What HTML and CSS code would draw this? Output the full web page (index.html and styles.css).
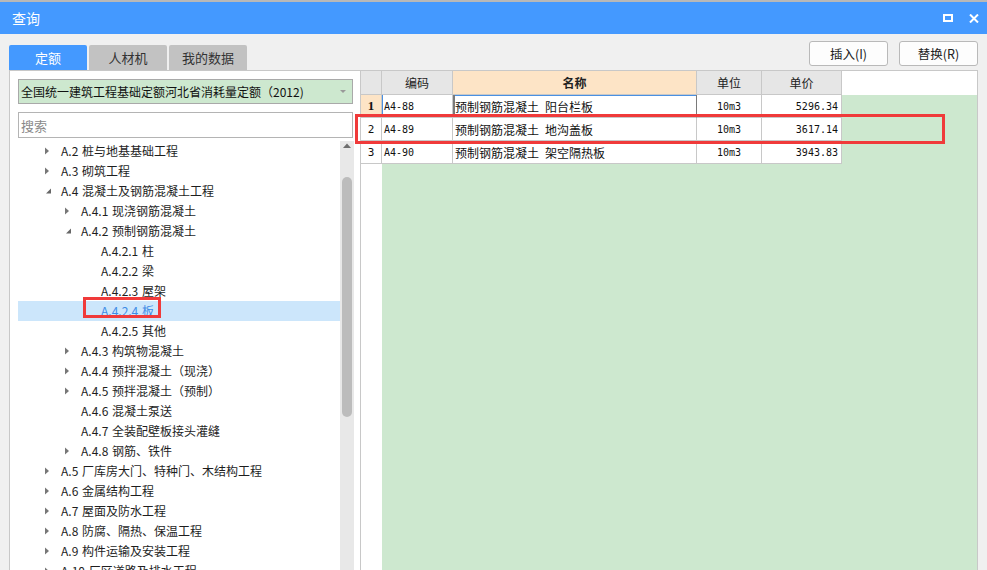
FILE: index.html
```html
<!DOCTYPE html>
<html lang="zh-CN">
<head>
<meta charset="utf-8">
<title>查询</title>
<link rel="stylesheet" href="styles.css">
</head>
<body>
<div class="titlebar">
  <span class="title">查询</span>
  <div class="winbtns">
    <svg class="ico-max" width="10" height="8" viewBox="0 0 10 8"><rect x="1" y="1" width="8" height="6" fill="none" stroke="#fff" stroke-width="2"/></svg>
    <svg class="ico-close" width="10" height="9" viewBox="0 0 10 9"><path d="M1 0.5 L9 8.5 M9 0.5 L1 8.5" stroke="#fff" stroke-width="2" fill="none"/></svg>
  </div>
</div>
<div class="toolbar">
  <div class="tabs">
    <div class="tab active">定额</div>
    <div class="tab">人材机</div>
    <div class="tab">我的数据</div>
  </div>
  <div class="actions">
    <button class="btn">插入(I)</button>
    <button class="btn">替换(R)</button>
  </div>
</div>
<div class="main">
  <div class="left">
    <div class="combo">
      <span class="combo-text">全国统一建筑工程基础定额河北省消耗量定额（2012)</span>
      <svg class="combo-arrow" width="6" height="3" viewBox="0 0 6 3"><path d="M0 0 H6 L3 3 Z" fill="#999"/></svg>
    </div>
    <div class="search">搜索</div>
    <div class="tree">
      <div class="tree-list">
        <div class="node l1"><span class="tw"><svg width="8" height="8" viewBox="0 0 8 8"><path d="M0 0.5 L4 4 L0 7.5 Z" fill="#777"/></svg></span>A.2 桩与地基基础工程</div>
        <div class="node l1"><span class="tw"><svg width="8" height="8" viewBox="0 0 8 8"><path d="M0 0.5 L4 4 L0 7.5 Z" fill="#777"/></svg></span>A.3 砌筑工程</div>
        <div class="node l1"><span class="tw"><svg width="8" height="8" viewBox="0 0 8 8"><path d="M6 1.5 L6 6.5 L1 6.5 Z" fill="#666"/></svg></span>A.4 混凝土及钢筋混凝土工程</div>
        <div class="node l2"><span class="tw"><svg width="8" height="8" viewBox="0 0 8 8"><path d="M0 0.5 L4 4 L0 7.5 Z" fill="#777"/></svg></span>A.4.1 现浇钢筋混凝土</div>
        <div class="node l2"><span class="tw"><svg width="8" height="8" viewBox="0 0 8 8"><path d="M6 1.5 L6 6.5 L1 6.5 Z" fill="#666"/></svg></span>A.4.2 预制钢筋混凝土</div>
        <div class="node l3"><span class="tw"></span>A.4.2.1 柱</div>
        <div class="node l3"><span class="tw"></span>A.4.2.2 梁</div>
        <div class="node l3"><span class="tw"></span>A.4.2.3 屋架</div>
        <div class="node l3 selected"><span class="tw"></span>A.4.2.4 板</div>
        <div class="node l3"><span class="tw"></span>A.4.2.5 其他</div>
        <div class="node l2"><span class="tw"><svg width="8" height="8" viewBox="0 0 8 8"><path d="M0 0.5 L4 4 L0 7.5 Z" fill="#777"/></svg></span>A.4.3 构筑物混凝土</div>
        <div class="node l2"><span class="tw"><svg width="8" height="8" viewBox="0 0 8 8"><path d="M0 0.5 L4 4 L0 7.5 Z" fill="#777"/></svg></span>A.4.4 预拌混凝土（现浇）</div>
        <div class="node l2"><span class="tw"><svg width="8" height="8" viewBox="0 0 8 8"><path d="M0 0.5 L4 4 L0 7.5 Z" fill="#777"/></svg></span>A.4.5 预拌混凝土（预制）</div>
        <div class="node l2"><span class="tw"></span>A.4.6 混凝土泵送</div>
        <div class="node l2"><span class="tw"></span>A.4.7 全装配壁板接头灌缝</div>
        <div class="node l2"><span class="tw"><svg width="8" height="8" viewBox="0 0 8 8"><path d="M0 0.5 L4 4 L0 7.5 Z" fill="#777"/></svg></span>A.4.8 钢筋、铁件</div>
        <div class="node l1"><span class="tw"><svg width="8" height="8" viewBox="0 0 8 8"><path d="M0 0.5 L4 4 L0 7.5 Z" fill="#777"/></svg></span>A.5 厂库房大门、特种门、木结构工程</div>
        <div class="node l1"><span class="tw"><svg width="8" height="8" viewBox="0 0 8 8"><path d="M0 0.5 L4 4 L0 7.5 Z" fill="#777"/></svg></span>A.6 金属结构工程</div>
        <div class="node l1"><span class="tw"><svg width="8" height="8" viewBox="0 0 8 8"><path d="M0 0.5 L4 4 L0 7.5 Z" fill="#777"/></svg></span>A.7 屋面及防水工程</div>
        <div class="node l1"><span class="tw"><svg width="8" height="8" viewBox="0 0 8 8"><path d="M0 0.5 L4 4 L0 7.5 Z" fill="#777"/></svg></span>A.8 防腐、隔热、保温工程</div>
        <div class="node l1"><span class="tw"><svg width="8" height="8" viewBox="0 0 8 8"><path d="M0 0.5 L4 4 L0 7.5 Z" fill="#777"/></svg></span>A.9 构件运输及安装工程</div>
        <div class="node l1"><span class="tw"><svg width="8" height="8" viewBox="0 0 8 8"><path d="M0 0.5 L4 4 L0 7.5 Z" fill="#777"/></svg></span>A.10 厂区道路及排水工程</div>
      </div>
      <div class="scrollbar">
        <svg class="sb-up" width="8" height="5" viewBox="0 0 8 5"><path d="M0 5 L4 0.5 L8 5 Z" fill="#6e6e6e"/></svg>
        <div class="sb-thumb"></div>
      </div>
    </div>
  </div>
  <div class="right">
    <div class="grow head">
      <div class="c num"></div>
      <div class="c">编码</div>
      <div class="c hl">名称</div>
      <div class="c">单位</div>
      <div class="c">单价</div>
    </div>
    <div class="grow">
      <div class="c num first">1</div>
      <div class="c code cur-row"><span class="m">A4-88</span></div>
      <div class="c name cur"><span>预制钢筋混凝土<span class="sp"></span>阳台栏板</span></div>
      <div class="c unit"><span class="m">10m3</span></div>
      <div class="c price"><span class="m">5296.34</span></div>
    </div>
    <div class="grow">
      <div class="c num"><span class="m">2</span></div>
      <div class="c code"><span class="m">A4-89</span></div>
      <div class="c name"><span>预制钢筋混凝土<span class="sp"></span>地沟盖板</span></div>
      <div class="c unit"><span class="m">10m3</span></div>
      <div class="c price"><span class="m">3617.14</span></div>
    </div>
    <div class="grow">
      <div class="c num"><span class="m">3</span></div>
      <div class="c code"><span class="m">A4-90</span></div>
      <div class="c name"><span>预制钢筋混凝土<span class="sp"></span>架空隔热板</span></div>
      <div class="c unit"><span class="m">10m3</span></div>
      <div class="c price"><span class="m">3943.83</span></div>
    </div>
  </div>
  <div class="mark mark-tree"></div>
  <div class="mark mark-row"></div>
</div>
</body>
</html>
```
FILE: styles.css
```css
* { box-sizing: border-box; }
html, body { margin: 0; padding: 0; }
body {
  width: 987px;
  height: 570px;
  overflow: hidden;
  background: #f0f0f0;
  font-family: "Noto Sans CJK SC", "Noto Sans", sans-serif;
  color: #222;
}
.titlebar {
  height: 34px;
  border-top: 2px solid #b8b8b8;
  background: #4499ff;
  display: flex;
  align-items: center;
  padding: 0 8px 0 12px;
  color: #fff;
  font-size: 14px;
}
.title { flex: 1; }
.winbtns { display: flex; align-items: center; gap: 16px; }
.toolbar {
  height: 36px;
  display: flex;
  justify-content: space-between;
  padding: 0 9px;
}
.tabs { display: flex; gap: 2px; align-self: flex-end; }
.tab {
  width: 78px;
  height: 25px;
  background: #c2c2c2;
  color: #333;
  font-size: 13px;
  display: flex;
  align-items: center;
  justify-content: center;
  border-radius: 2px 2px 0 0;
}
.tab.active { background: #4499ff; color: #fff; }
.actions { display: flex; gap: 11px; margin-top: 7px; align-self: flex-start; }
.btn {
  width: 79px;
  height: 25px;
  border: 1px solid #b9b9b9;
  border-radius: 3px;
  background: #fdfdfd;
  font-family: "Noto Sans CJK SC", sans-serif;
  font-size: 12.5px;
  color: #222;
  padding: 0;
}
.main {
  position: relative;
  height: 500px;
  display: flex;
  padding-left: 9px;
}
.left {
  width: 351px;
  height: 500px;
  background: #fff;
  border-left: 1px solid #c8c8c8;
  border-top: 1px solid #c8c8c8;
  padding: 8px 0 0 8px;
  display: flex;
  flex-direction: column;
}
.combo {
  width: 335px;
  height: 25px;
  border: 1px solid #a9a9a9;
  background: #cde8cf;
  display: flex;
  align-items: center;
  padding: 0 6px 0 2px;
  font-size: 12px;
  color: #111;
}
.combo-text { flex: 1; }
.search {
  margin-top: 8px;
  width: 335px;
  height: 26px;
  border: 1px solid #b4b4b4;
  font-size: 13px;
  color: #8a8a8a;
  padding-left: 2px;
  display: flex;
  align-items: center;
}
.tree {
  margin-top: 3px;
  flex: 1;
  min-height: 0;
  display: flex;
}
.tree-list {
  width: 322px;
  overflow: hidden;
}
.node {
  height: 20px;
  line-height: 20px;
  font-size: 12px;
  color: #1e1e1e;
  white-space: pre;
  word-spacing: 1px;
  display: flex;
  align-items: center;
}
.node.l1 { padding-left: 27px; }
.node.l2 { padding-left: 47px; }
.node.l3 { padding-left: 67px; }
.tw {
  width: 16px;
  height: 20px;
  display: inline-flex;
  align-items: center;
  flex: none;
}
.tw svg { display: block; }
.node.selected { background: #cce6fb; color: #3f8ce6; }
.scrollbar {
  width: 14px;
  background: #e8e8e8;
  display: flex;
  flex-direction: column;
  align-items: center;
  padding-top: 2px;
}
.sb-up { display: block; }
.sb-thumb {
  margin-top: 29px;
  width: 10px;
  height: 240px;
  border-radius: 5px;
  background: #bcbcbc;
}
.right {
  width: 618px;
  height: 500px;
  border: 1px solid #c8c8c8;
  border-bottom: none;
  background:
    linear-gradient(#fff, #fff) 0 0 / 100% 24px no-repeat,
    linear-gradient(#fff, #fff) 0 0 / 21px 100% no-repeat,
    #cde8cf;
}
.grow {
  display: grid;
  grid-template-columns: 21px 71px 244px 65px 80px;
  height: 23px;
}
.grow.head { height: 24px; }
.c {
  border-right: 1px solid #c8c8c8;
  border-bottom: 1px solid #c8c8c8;
  background: #fff;
  font-size: 12px;
  color: #111;
  display: flex;
  align-items: center;
  white-space: nowrap;
  overflow: hidden;
}
.sp { display: inline-block; width: 6px; }
.head .c {
  background: #e6e6e6;
  justify-content: center;
  color: #222;
}
.head .c.hl { background: #fde4c6; font-weight: bold; }
.c.num { justify-content: center; }
.c.num.first {
  background: #fde4c6;
  font-family: "Liberation Serif", serif;
  font-weight: bold;
  font-size: 13px;
}
.c.code { padding-left: 2px; }
.c.cur-row { box-shadow: inset 1px 0 0 #4a90e2; }
.c.name { padding-left: 2px; }
.c.cur {
  border-right-color: #7a7a7a;
  box-shadow: inset 2px 0 0 #7a7a7a, inset 0 1px 0 #4a90e2;
}
.c.unit { justify-content: center; }
.c.price { justify-content: flex-end; padding-right: 3px; }
.m {
  font-family: "DejaVu Sans Mono", "Liberation Mono", monospace;
  font-size: 10px;
}
.c.num .m { font-size: 11px; }
.mark {
  position: absolute;
  border: 3px solid #f03a3a;
  pointer-events: none;
}
.mark-tree { left: 83px; top: 227px; width: 78px; height: 21px; }
.mark-row { left: 355px; top: 44px; width: 590px; height: 30px; }
```
